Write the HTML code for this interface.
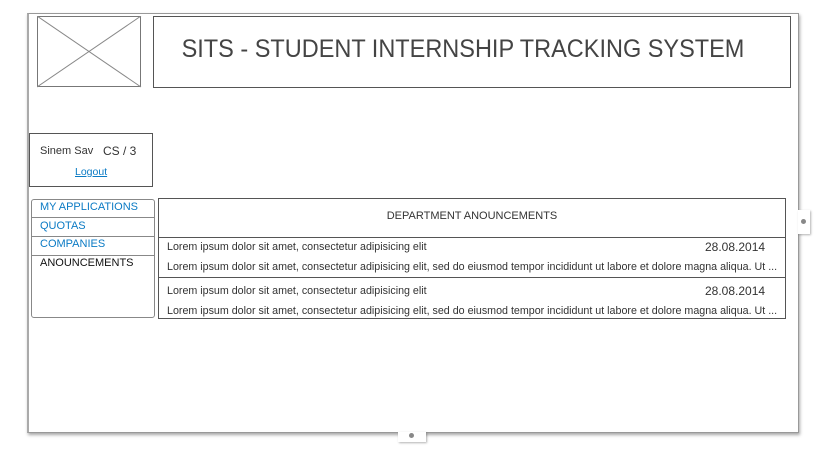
<!DOCTYPE html>
<html><head><style>
body{margin:0;width:832px;height:455px;background:#fff;position:relative;overflow:hidden;font-family:"Liberation Sans",sans-serif;color:#333}
.a{position:absolute;box-sizing:border-box}
.b{border:1px solid #555}
.t{position:absolute;white-space:nowrap;font-size:10.7px;color:#333}
.blue{color:#0a7ac4}
</style></head><body>
<div class="a" style="left:27px;top:13px;width:772px;height:420px;border:1px solid #999;border-left:2px solid #aaa;box-shadow:1px 2px 3px rgba(0,0,0,.35)"></div>
<div class="a" style="left:798px;top:210px;width:12px;height:24px;background:#fff;box-shadow:1px 1px 2px rgba(0,0,0,.3)"></div>
<div class="a" style="left:801px;top:219px;width:5px;height:5px;border-radius:50%;background:#888"></div>
<div class="a" style="left:398px;top:432px;width:28px;height:10px;background:#fff;box-shadow:1px 1px 2px rgba(0,0,0,.3)"></div>
<div class="a" style="left:409px;top:433px;width:5px;height:5px;border-radius:50%;background:#888"></div>

<svg class="a" style="left:37px;top:16px" width="105" height="72"><rect x="0.5" y="0.5" width="103" height="70" fill="none" stroke="#777"/><line x1="0" y1="0" x2="104" y2="71" stroke="#888"/><line x1="104" y1="0" x2="0" y2="71" stroke="#888"/></svg>
<div class="a b" style="left:153px;top:16px;width:638px;height:72px"></div>
<div class="t" style="left:153px;width:620px;text-align:center;top:35px;font-size:25px;color:#444;transform:scaleX(0.94);transform-origin:310px 0">SITS - STUDENT INTERNSHIP TRACKING SYSTEM</div>

<div class="a b" style="left:29px;top:133px;width:124px;height:54px"></div>
<div class="t" style="left:40px;top:145px;font-size:11px">Sinem Sav</div>
<div class="t" style="left:103px;top:144px;font-size:12px">CS / 3</div>
<div class="t blue" style="left:75px;top:166px;font-size:10.5px;text-decoration:underline">Logout</div>

<div class="a" style="left:31px;top:199px;width:124px;height:119px;border:1px solid #888;border-radius:3px"></div>
<div class="a" style="left:31px;top:217px;width:124px;border-top:1px solid #888"></div>
<div class="a" style="left:31px;top:236px;width:124px;border-top:1px solid #888"></div>
<div class="a" style="left:31px;top:255px;width:124px;border-top:1px solid #888"></div>
<div class="t blue" style="left:40px;top:201px;font-size:11px">MY APPLICATIONS</div>
<div class="t blue" style="left:40px;top:220px;font-size:11px">QUOTAS</div>
<div class="t blue" style="left:40px;top:238px;font-size:11px">COMPANIES</div>
<div class="t" style="left:40px;top:257px;font-size:11px;color:#111">ANOUNCEMENTS</div>

<div class="a b" style="left:158px;top:198px;width:628px;height:121px"></div>
<div class="a" style="left:158px;top:237px;width:628px;border-top:1px solid #555"></div>
<div class="a" style="left:158px;top:277px;width:628px;border-top:1px solid #555"></div>
<div class="t" style="left:158px;width:628px;text-align:center;top:210px;font-size:11px">DEPARTMENT ANOUNCEMENTS</div>
<div class="t" style="left:167px;top:241px">Lorem ipsum dolor sit amet, consectetur adipisicing elit</div>
<div class="t" style="left:705px;top:240px;font-size:12px">28.08.2014</div>
<div class="t" style="left:167px;top:261px;width:612px;overflow:hidden">Lorem ipsum dolor sit amet, consectetur adipisicing elit, sed do eiusmod tempor incididunt ut labore et dolore magna aliqua. Ut ...</div>
<div class="t" style="left:167px;top:285px">Lorem ipsum dolor sit amet, consectetur adipisicing elit</div>
<div class="t" style="left:705px;top:284px;font-size:12px">28.08.2014</div>
<div class="t" style="left:167px;top:305px;width:612px;overflow:hidden">Lorem ipsum dolor sit amet, consectetur adipisicing elit, sed do eiusmod tempor incididunt ut labore et dolore magna aliqua. Ut ...</div>
</body></html>
